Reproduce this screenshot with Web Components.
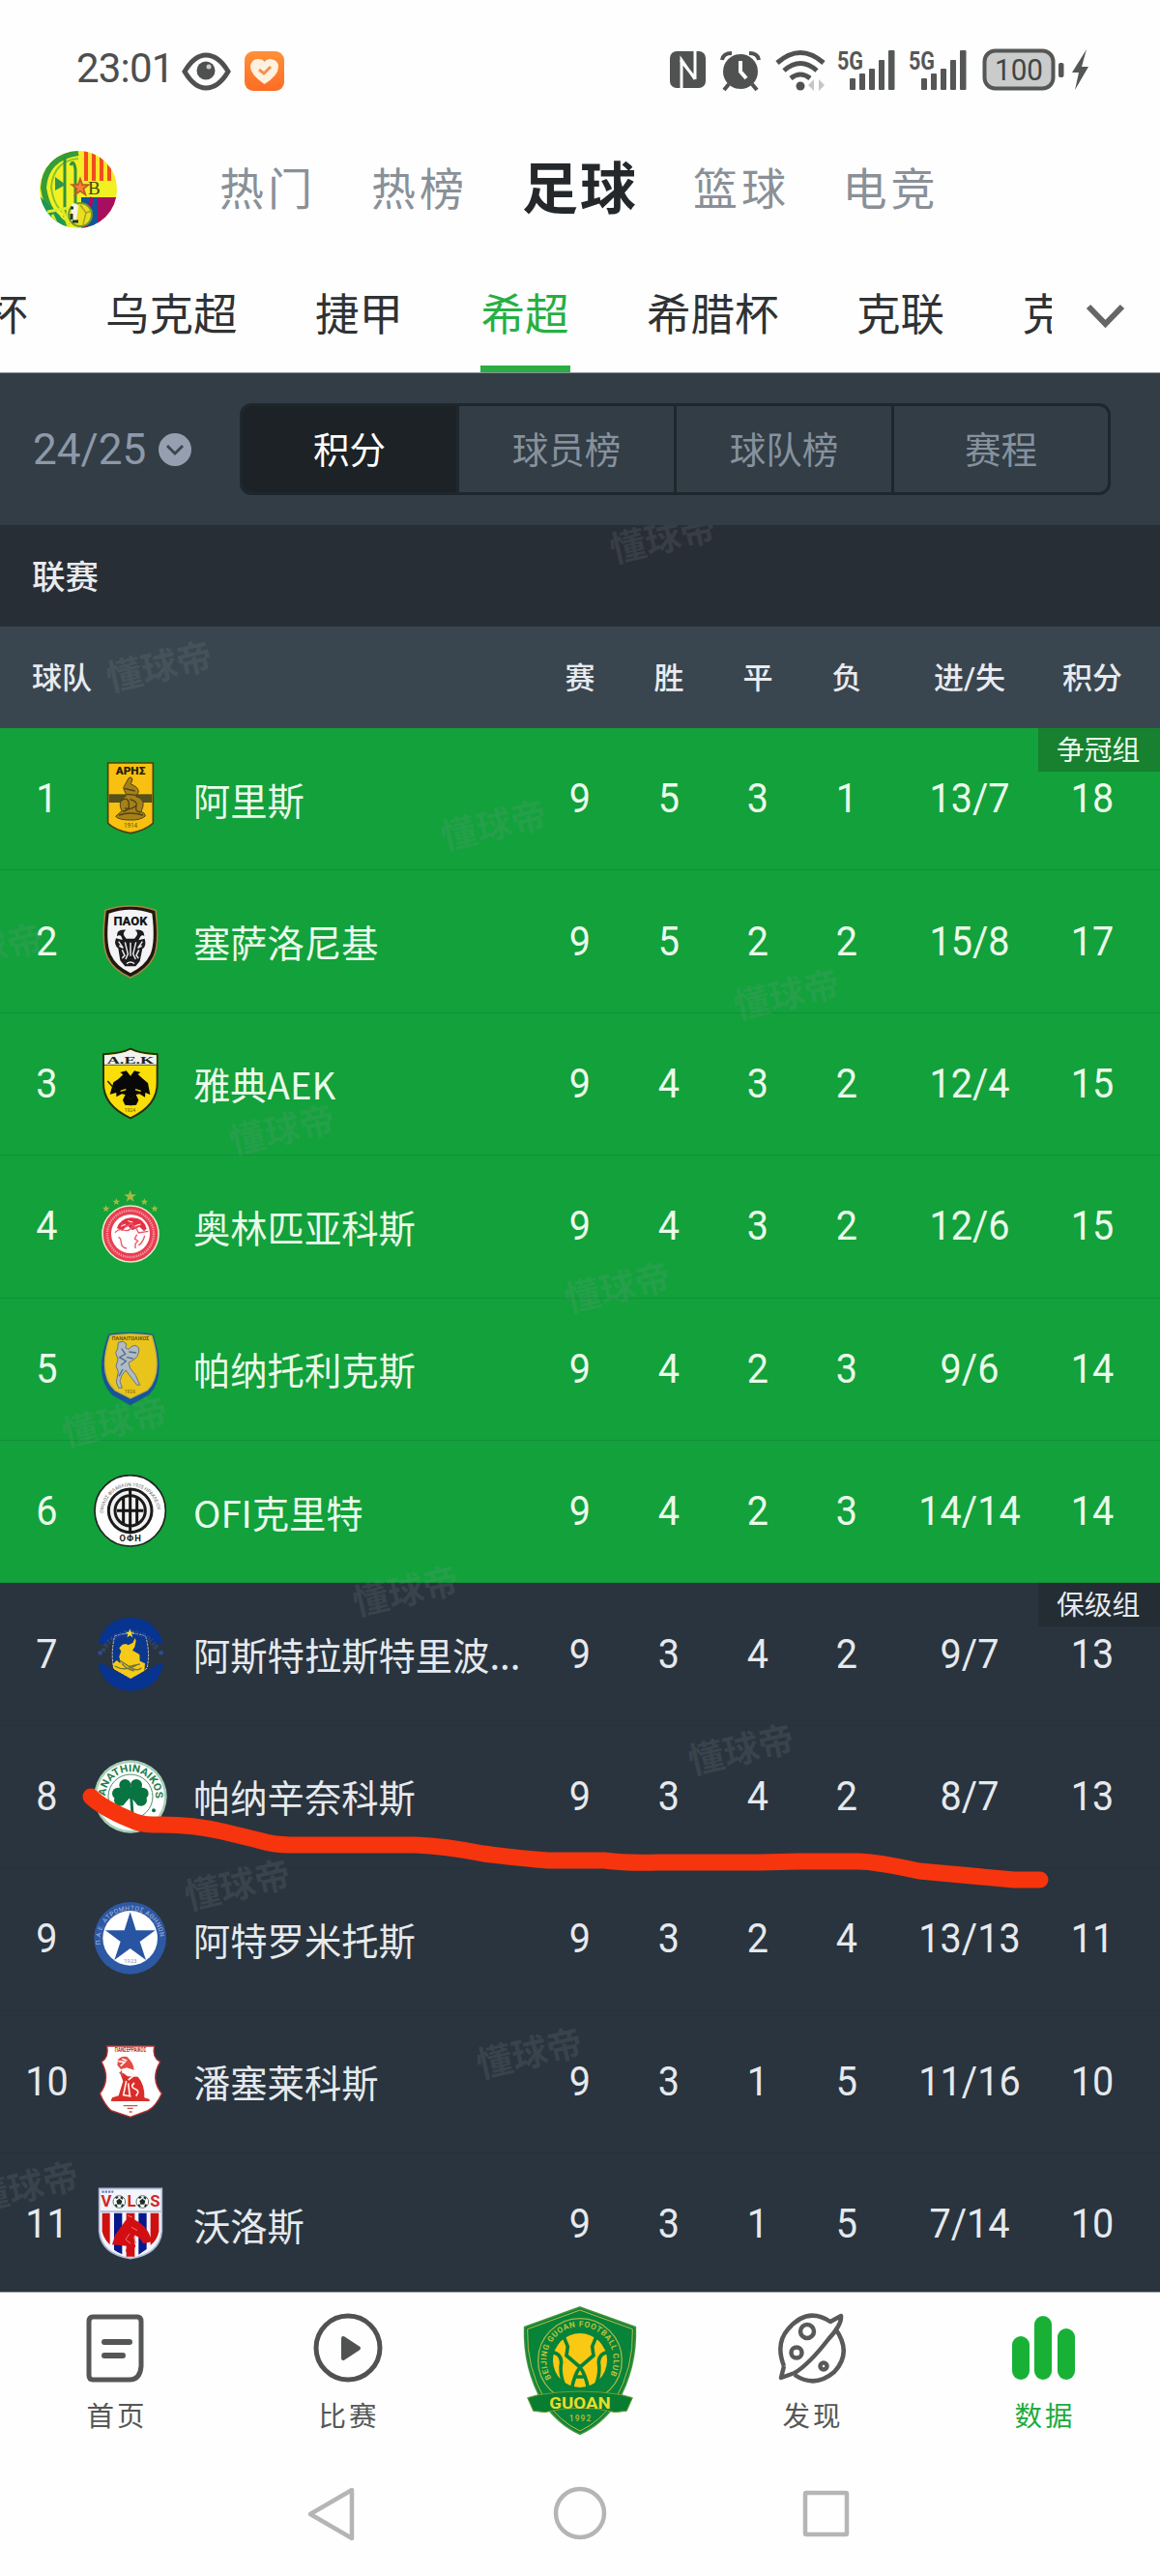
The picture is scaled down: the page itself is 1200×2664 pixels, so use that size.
<!DOCTYPE html>
<html lang="zh-CN">
<head>
<meta charset="UTF-8">
<title>希超 积分</title>
<style>
    body {
        margin: 0;
        width: 1200px;
        height: 2664px;
        overflow: hidden;
        background-color: #fefefe;
        font-family: Roboto, "Noto Sans CJK SC", sans-serif;
    }
</style>
</head>
<body>
<score-app>
    <status-bar></status-bar>
    <sport-tabs>
        <sport-tab>热门</sport-tab>
        <sport-tab>热榜</sport-tab>
        <sport-tab active>足球</sport-tab>
        <sport-tab>篮球</sport-tab>
        <sport-tab>电竞</sport-tab>
    </sport-tabs>
    <league-tabs>
        <league-tab>杯</league-tab>
        <league-tab>乌克超</league-tab>
        <league-tab>捷甲</league-tab>
        <league-tab active>希超</league-tab>
        <league-tab>希腊杯</league-tab>
        <league-tab>克联</league-tab>
        <league-tab>克</league-tab>
    </league-tabs>
    <season-bar season="24/25">
        <season-tab active>积分</season-tab>
        <season-tab>球员榜</season-tab>
        <season-tab>球队榜</season-tab>
        <season-tab>赛程</season-tab>
    </season-bar>
    <standings-table heading="联赛"></standings-table>
    <bottom-nav>
        <nav-item icon="home">首页</nav-item>
        <nav-item icon="play">比赛</nav-item>
        <nav-item icon="guoan"></nav-item>
        <nav-item icon="planet">发现</nav-item>
        <nav-item icon="chart" active>数据</nav-item>
    </bottom-nav>
    <system-nav></system-nav>
</score-app>

<script>
const STAR = "0,-10 2.4,-3.2 9.5,-3.1 3.8,1.2 5.9,8.1 0,4 -5.9,8.1 -3.8,1.2 -9.5,-3.1 -2.4,-3.2";

// every crest is drawn on a 228 x 228 grid
const CRESTS = {
    aris: `
        <path d="M44 3H184V190Q160 212 114 221Q66 212 44 190Z" fill="#f8c010" stroke="#4a4410" stroke-width="5"/>
        <rect x="47" y="100" width="134" height="26" fill="#55501c"/>
        <text x="114" y="40" font-size="32" font-weight="900" text-anchor="middle" textLength="92" lengthAdjust="spacingAndGlyphs" fill="#221e08">ΑΡΗΣ</text>
        <path d="M108 50q9-7 12 4l-5 15q24 8 24 24l-8 14q26 7 22 30l-6 17q14 5 13 14q-18 14-48 12q-34 0-44-11l19-17q-12-24 3-39l12-10q-9-16-10-23z" fill="#a5811a" stroke="#554516" stroke-width="3"/>
        <path d="M84 121q22-16 25 8t-20 24M112 116q26 6 20 22t14 18M78 165q35-12 75 0M94 82l34 8M103 100l32 3M96 143q18 9 35-7" fill="none" stroke="#504214" stroke-width="4"/>
        <text x="114" y="203" font-size="19" text-anchor="middle" fill="#5f4d10">1914</text>`,
    paok: `
        <path d="M36 16Q112-10 192 16Q205 120 186 161Q166 202 114 225Q60 202 42 161Q23 120 36 16Z" fill="#22170f" stroke="#a58642" stroke-width="5"/>
        <path d="M47 26Q112 3 181 26Q192 115 175 154Q158 190 114 211Q69 190 53 154Q36 115 47 26Z" fill="#f4f4f6"/>
        <text x="114" y="62" font-size="36" font-weight="900" text-anchor="middle" textLength="105" lengthAdjust="spacingAndGlyphs" fill="#151515">ΠΑΟΚ</text>
        <path d="M72 97Q70 73 100 77Q85 87 101 104H126Q143 86 128 77Q158 72 157 97Q148 86 139 109L158 104Q165 128 151 135L143 174L130 190H97L82 172L76 134Q61 124 69 103L89 108Q85 87 72 97Z" fill="#1c1c1e"/>
        <path d="M97 115L106 152L99 168M131 115L122 152L130 168M114 116V158M77 113L91 133L79 126M151 113L137 133L149 126M88 139L96 156L88 165M140 139L132 156L139 165M102 182q12-10 24 0" fill="none" stroke="#e8e8e8" stroke-width="4.5"/>`,
    aek: `
        <path d="M30 22Q88 19 114 5Q140 19 197 22V109Q199 181 114 220Q28 181 30 109Z" fill="#fade08" stroke="#26310e" stroke-width="6"/>
        <path d="M33 25Q88 22 114 8Q140 22 194 25V54H33Z" fill="#f3f3f3"/>
        <path d="M33 55H194" stroke="#5c5b1b" stroke-width="3"/>
        <text x="114" y="50" font-size="34" font-family="Liberation Serif" font-weight="bold" text-anchor="middle" textLength="146" lengthAdjust="spacingAndGlyphs" fill="#20251c">A.E.K</text>
        <path d="M114 89L101 73L82 78L91 85L76 99L61 109L50 146L70 141V154L87 145L98 147L90 164L97 179L114 181L132 179L139 164L131 147L142 145L159 155L160 141L175 147L168 111L151 97L137 84L145 78L126 73Z" fill="#080808"/>
        <path d="M43 105L67 132M90 139l11-6M128 133l11 6M104 152l10 8 10-8" stroke="#161605" stroke-width="4"/>
        <path d="M83 136l17-5M129 131l17 5" stroke="#fade08" stroke-width="4"/>
        <text x="112" y="200" font-size="15" text-anchor="middle" fill="#5b5010">1924</text>`,
    olympiacos: `
        <g fill="#a6ba45">
            <polygon points="${STAR}" transform="translate(113 22) scale(2)"/>
            <polygon points="${STAR}" transform="translate(70 39) scale(1.2)"/>
            <polygon points="${STAR}" transform="translate(157 39) scale(1.2)"/>
            <polygon points="${STAR}" transform="translate(38 60) scale(1.2)"/>
            <polygon points="${STAR}" transform="translate(189 60) scale(1.2)"/>
        </g>
        <circle cx="114" cy="138" r="87" fill="#e93e51" stroke="#eee5c8" stroke-width="5"/>
        <circle cx="114" cy="138" r="72" fill="none" stroke="#f59aa3" stroke-width="7" stroke-dasharray="4 3"/>
        <circle cx="114" cy="138" r="60" fill="#fff"/>
        <path d="M72 120Q82 91 114 88Q154 85 164 122L156 130L142 116L120 127L104 112L88 129Z" fill="#e62f43"/>
        <path d="M66 134q12-14 26-8t25-6t22 15l30-5M87 107l13 9 15-10 15 10 18-7M76 149q8 0 9 16t17 18M134 140l-7 13 10 7-8 9v14M158 144q-5 20-19 30" fill="none" stroke="#eb5364" stroke-width="4"/>
        <path d="M84 115l15-7M106 98l15 4M128 113l17-5" stroke="#fff" stroke-width="3"/>`,
    panetolikos: `
        <path d="M46 5Q114-7 184 5Q228 136 172 193L114 226L58 195Q-4 136 46 5Z" fill="#18549b"/>
        <path d="M51 10Q114 0 180 10Q217 130 166 179L114 204L67 180Q11 130 51 10Z" fill="#e9c41b" stroke="#c3b33d" stroke-width="4"/>
        <text x="114" y="23" font-size="16" font-weight="bold" text-anchor="middle" textLength="115" lengthAdjust="spacingAndGlyphs" fill="#6f5414">ΠΑΝΑΙΤΩΛΙΚΟΣ</text>
        <path d="M76 31L91 28L102 36L98 47L108 52Q127 30 140 49Q143 75 118 88L108 94L113 111L130 133L143 163H134L118 142L99 117L87 133L81 151L88 172H77L70 153L76 122L69 104L75 84L68 62L74 51Z" fill="#b2bac2" stroke="#667583" stroke-width="3"/>
        <path d="M86 50l12 17-18 10 20 12-16 13M109 60l23 3M102 77l20 4M90 114l-12 22" fill="none" stroke="#4a6e93" stroke-width="4"/>
        <text x="112" y="190" font-size="15" text-anchor="middle" fill="#766016">1926</text>`,
    ofi: `
        <path id="ring" d="M30 120A84 84 0 0 1 198 120" fill="none"/>
        <circle cx="113" cy="112" r="110" fill="#fff" stroke="#222" stroke-width="5"/>
        <circle cx="113" cy="112" r="67" fill="#f1f1f1" stroke="#1b1b1b" stroke-width="9"/>
        <circle cx="113" cy="112" r="47" fill="none" stroke="#1b1b1b" stroke-width="9"/>
        <path d="M113 44V184M92 73V151M134 73V151M72 112H154" stroke="#151515" stroke-width="9" fill="none"/>
        <text font-size="15" fill="#666"><textPath href="#ring" textLength="254">ΟΜΙΛΟΣ ΦΙΛΑΘΛΩΝ 1925 ΗΡΑΚΛΕΙΟΥ</textPath></text>
        <text x="113" y="206" font-size="28" font-weight="bold" text-anchor="middle" fill="#202020" textLength="67">ΟΦΗ</text>`,
    asteras: `
        <path id="top" d="M35 108A84 84 0 0 1 193 108" fill="none"/>
        <path d="M14 78Q38 0 114 0Q189 0 216 78L198 83L171 66Q114 32 58 66L31 83Z" fill="#073391"/>
        <path d="M14 144Q32 139 58 162Q114 190 170 162Q196 139 216 144Q200 224 114 227Q34 224 14 144Z" fill="#073391"/>
        <path d="M65 57Q114 40 161 57Q176 110 165 157L114 188L62 157Q52 110 65 57Z" fill="#0b378e" stroke="#bac3d0" stroke-width="3" stroke-dasharray="8 3"/>
        <polygon points="${STAR}" transform="translate(112 49) scale(1.5)" fill="#f7dc2c"/>
        <path d="M100 81L107 85L121 78L128 63L131 72L127 91L120 101L142 114L143 134L159 142L157 165L115 188L63 160L59 144L71 132L83 142L79 120L85 104L79 94L89 83Z" fill="#f6cb17"/>
        <path d="M65 150q31 18 68-3M80 132l29 19 34-7M108 151q26 18 40 4M87 142q15 18 38 23" fill="none" stroke="#6d7240" stroke-width="4"/>
        <text font-size="20" fill="#3b579c"><textPath href="#top" textLength="195">ASTERAS TRIPOLIS</textPath></text>
        <g fill="#2d4c94"><circle cx="20" cy="109" r="7"/><circle cx="209" cy="109" r="7"/></g>`,
    panathinaikos: `
        <path id="arc" d="M38 132A78 78 0 1 1 190 132" fill="none"/>
        <circle cx="114" cy="114" r="113" fill="#a7cfb6"/>
        <circle cx="114" cy="114" r="105" fill="#fff"/>
        <circle cx="114" cy="114" r="69" fill="#fff" stroke="#4c9067" stroke-width="3"/>
        <text font-size="32" font-weight="bold" fill="#277e50"><textPath href="#arc" textLength="268" lengthAdjust="spacingAndGlyphs">PANATHINAIKOS</textPath></text>
        <g fill="#087441">
            <circle cx="97" cy="78" r="18"/><circle cx="132" cy="78" r="18"/><path d="M79 84L114 122L150 84Z"/>
            <circle cx="75" cy="104" r="18"/><circle cx="81" cy="125" r="18"/><path d="M76 86L118 110L89 143Z"/>
            <circle cx="152" cy="104" r="18"/><circle cx="147" cy="125" r="18"/><path d="M151 86L110 110L139 143Z"/>
            <path d="M111 105L115 162H124L120 107Z"/><circle cx="186" cy="157" r="6"/>
        </g>`,
    atromitos: `
        <path id="arc" d="M21 132A93 93 0 1 1 205 132" fill="none"/>
        <circle cx="113" cy="112" r="112" fill="#2d58a3"/>
        <circle cx="113" cy="112" r="85" fill="#fff"/>
        <text font-size="20" fill="#a9badc"><textPath href="#arc" textLength="296">Π.Α.Ε. ΑΤΡΟΜΗΤΟΣ ΑΘΗΝΩΝ</textPath></text>
        <polygon points="113,31 131,88 191,88 143,123 162,180 113,144 64,180 83,123 36,88 95,88" fill="#2855a2"/>
        <text x="113" y="190" font-size="18" text-anchor="middle" fill="#8798b9">1923</text>`,
    panserraikos: `
        <path d="M41 3H188Q180 38 206 52Q174 105 211 150Q193 190 168 203L114 223L54 203Q34 186 19 150Q54 105 24 52Q48 38 41 3Z" fill="#fff" stroke="#b72d31" stroke-width="4"/>
        <text x="114" y="22" font-size="19" font-weight="bold" text-anchor="middle" textLength="97" lengthAdjust="spacingAndGlyphs" fill="#b23334">ΠΑΝΣΕΡΡΑΪΚΟΣ</text>
        <path d="M75 46Q83 33 103 36Q124 55 125 77L102 70L84 75L73 62Z" fill="#e34b42"/>
        <path d="M91 86L105 97L137 98Q159 123 157 163L173 168V174H53L57 163L77 157L91 112L83 91Z" fill="#da2d29"/>
        <path d="M98 76l27 18-18 14M101 111l-9 44 24 4M107 118l5 40M126 117q-15 13 2 19t3 22M76 50l20 3-13 12M88 43l15 5" fill="none" stroke="#fff3ef" stroke-width="5"/>
        <path d="M80 84l12 13M87 79q-6 8 5 11M92 188h44M104 196h18M110 207h9" fill="none" stroke="#ca504a" stroke-width="4"/>`,
    volos: `
        <path d="M17 4H211V137Q204 208 114 221Q24 208 17 137Z" fill="#f3f5fa" stroke="#aebada" stroke-width="5"/>
        <path d="M20 75H208" stroke="#a1b3d4" stroke-width="4"/>
        <path d="M26 80H50V178Q32 161 26 137Z M101 80H127V215H101Z M176 80H202V137Q197 163 176 180Z" fill="#ce1110"/>
        <path d="M63 80H88V208Q74 202 63 194Z M139 80H164V192L139 209Z" fill="#07178a"/>
        <path d="M100 101L122 98Q164 116 178 158L180 169L154 175L141 156L125 148L118 160L130 182L112 213L99 198L104 182L57 178L67 147Z" fill="#d30e13"/>
        <path d="M106 88l14 5M117 124l18 10M111 144l-12 18 16 13M124 154l7 20" fill="none" stroke="#ee7670" stroke-width="3"/>
        <g font-size="50" font-weight="bold" fill="#cf2825" text-anchor="middle"><text x="39" y="61">V</text><text x="117" y="61">L</text><text x="190" y="61">S</text></g>
        <g fill="#fff" stroke="#64756e" stroke-width="3"><circle cx="79" cy="45" r="19"/><circle cx="151" cy="45" r="19"/></g>
        <g fill="#1d2f29"><path id="ball" d="M79 35l9 7-3 11H73l-3-11zM66 31l8-3 3 5-8 3zM84 28l8 4-3 6-7-4zM64 54l6-2 4 7-4 3zM94 54l-6-2-4 7 4 3z"/><use href="#ball" x="72"/></g>
        <path d="M25 14h36" stroke="#6c7db7" stroke-width="7" stroke-dasharray="7 3"/>`
};

const NAV_ICONS = {
    home: `<svg width="72" height="76" viewBox="0 0 72 76" fill="none" stroke="#555756" stroke-width="5" stroke-linecap="round" stroke-linejoin="round">
        <path d="M12 5H58Q62 5 62 10V56Q61 70 50 70H12Q8 70 8 65V10Q8 5 12 5Z"/>
        <path d="M24 31H50M24 45H43" stroke-width="6"/></svg>`,
    play: `<svg width="72" height="76" viewBox="0 0 72 76"><circle cx="36" cy="37" r="33" fill="none" stroke="#505251" stroke-width="5"/><path d="M31 27L47 37.500L31 48Z" fill="#505251" stroke="#505251" stroke-width="4" stroke-linejoin="round"/></svg>`,
    planet: `<svg width="72" height="76" viewBox="0 0 72 76" fill="none" stroke="#585a59" stroke-width="4.500" stroke-linejoin="round">
        <path d="M7 56Q-2 33 11 18Q31-6 55 10L66 4Q67 13 53 28Q33 54 18 63L4 68L7 56M60 17Q78 42 59 62Q39 79 18 65"/>
        <circle cx="31" cy="20" r="7"/><circle cx="20" cy="42" r="5.500"/><circle cx="48" cy="56" r="3.500"/></svg>`,
    chart: `<svg width="72" height="76" viewBox="0 0 72 76" fill="#18b136"><rect x="3" y="25" width="18" height="45" rx="9"/><rect x="26" y="4" width="18" height="66" rx="9"/><rect x="50" y="17" width="18" height="53" rx="9"/></svg>`,
    guoan: `<svg width="140" height="150" viewBox="0 0 420 450">
        <path id="club" d="M122 250A104 104 0 1 1 298 250" fill="none"/>
        <path d="M210 30L382 92Q386 220 325 325Q276 395 210 424Q144 395 95 325Q34 220 38 92Z" fill="#07833a" stroke="#3f923d" stroke-width="5"/>
        <path d="M210 39L373 98Q377 218 318 319Q272 386 210 414Q148 386 102 319Q43 218 47 98Z" fill="none" stroke="#bebd3f" stroke-width="3"/>
        <circle cx="210" cy="195" r="130" fill="none" stroke="#a6b842" stroke-width="4"/>
        <text font-size="25" font-weight="bold" fill="#b7c43a"><textPath href="#club" textLength="432">BEIJING GUOAN FOOTBALL CLUB</textPath></text>
        <circle cx="210" cy="195" r="84" fill="#fac913"/>
        <path d="M158 118L172 152L168 180L210 216L252 180L248 152L262 118M122 170Q150 172 152 200Q146 235 160 270M298 170Q270 172 268 200Q274 235 260 270M184 285Q192 240 210 216Q228 240 236 285M190 246H230" fill="none" stroke="#07833a" stroke-width="11"/>
        <path d="M47 311L80 302Q210 280 340 302L373 311L355 352L319 356Q210 329 101 356L65 352Z" fill="#087d32" stroke="#6f9e32" stroke-width="3"/>
        <text x="210" y="345" font-size="47" font-weight="bold" text-anchor="middle" textLength="190" lengthAdjust="spacingAndGlyphs" fill="#eddb29">GUOAN</text>
        <text x="210" y="384" font-size="25" font-weight="bold" text-anchor="middle" textLength="68" fill="#a2b83b">1992</text></svg>`
};

const TEAMS = [
    { rank: 1,  crest: "aris",          name: "阿里斯",            stats: [9, 5, 3, 1, "13/7", 18],  group: "争冠组" },
    { rank: 2,  crest: "paok",          name: "塞萨洛尼基",        stats: [9, 5, 2, 2, "15/8", 17] },
    { rank: 3,  crest: "aek",           name: "雅典AEK",           stats: [9, 4, 3, 2, "12/4", 15] },
    { rank: 4,  crest: "olympiacos",    name: "奥林匹亚科斯",      stats: [9, 4, 3, 2, "12/6", 15] },
    { rank: 5,  crest: "panetolikos",   name: "帕纳托利克斯",      stats: [9, 4, 2, 3, "9/6", 14] },
    { rank: 6,  crest: "ofi",           name: "OFI克里特",         stats: [9, 4, 2, 3, "14/14", 14] },
    { rank: 7,  crest: "asteras",       name: "阿斯特拉斯特里波...", stats: [9, 3, 4, 2, "9/7", 13],   group: "保级组" },
    { rank: 8,  crest: "panathinaikos", name: "帕纳辛奈科斯",      stats: [9, 3, 4, 2, "8/7", 13] },
    { rank: 9,  crest: "atromitos",     name: "阿特罗米托斯",      stats: [9, 3, 2, 4, "13/13", 11] },
    { rank: 10, crest: "panserraikos",  name: "潘塞莱科斯",        stats: [9, 3, 1, 5, "11/16", 10] },
    { rank: 11, crest: "volos",         name: "沃洛斯",            stats: [9, 3, 1, 5, "7/14", 10] }
];

const GRID = "97px 76px 27px 354px 92px 92px 92px 92px 162px 92px";

class ScoreApp extends HTMLElement {
    connectedCallback() {
        this.attachShadow({ mode: "open" });
        this.shadowRoot.innerHTML = `
            <style>
                :host { display: flex; flex-direction: column; width: 1200px; height: 2664px; }
            </style>
            <slot></slot>
        `;
    }
}

class StatusBar extends HTMLElement {
    connectedCallback() {
        const signal = `
            <svg width="62" height="44" viewBox="0 0 62 44" fill="#555756">
                <text x="1" y="21" font-size="25" font-weight="bold" textLength="27" lengthAdjust="spacingAndGlyphs">5G</text>
                <rect x="14" y="30" width="6" height="12" rx="1"/><rect x="24" y="25" width="6" height="17" rx="1"/>
                <rect x="34" y="20" width="6" height="22" rx="1"/><rect x="44" y="11" width="6" height="31" rx="1"/>
                <rect x="54" y="1" width="6.500" height="41" rx="1"/>
            </svg>`;
        this.attachShadow({ mode: "open" });
        this.shadowRoot.innerHTML = `
            <style>
                :host { display: flex; align-items: center; height: 146px; box-sizing: border-box; padding: 0 72px 0 79px; color: #4d4f4e; }
                .time { width: 109px; font-size: 42px; line-height: 50px; letter-spacing: -0.8px; position: relative; top: -2px; }
                .left, .right { display: flex; align-items: center; }
                .right { margin-left: auto; }
                svg { display: block; flex: none; overflow: visible; }
            </style>
            <div class="left">
                <div class="time">23:01</div>
                <svg width="64" height="44" viewBox="0 0 64 44">
                    <path d="M3 23Q13 6 25 6Q38 6 48 23Q38 40 25 40Q13 40 3 23Z" fill="none" stroke="#4f5150" stroke-width="5"/>
                    <circle cx="25" cy="22" r="9.500" fill="#4f5150"/><circle cx="28" cy="18" r="2.500" fill="#ccc"/>
                </svg>
                <svg width="44" height="44" viewBox="0 0 44 44">
                    <defs><linearGradient id="o" x2="0" y2="1"><stop stop-color="#ff9038"/><stop offset="1" stop-color="#fd6c25"/></linearGradient></defs>
                    <rect x="1" y="2" width="41" height="41" rx="9" fill="url(#o)"/>
                    <path d="M21.500 36Q7 26 7 18Q8 10 15 10Q20 10 21.500 13Q24 10 28 10Q36 11 36 18Q36 27 21.500 36Z" fill="#fff1df"/>
                    <path d="M16 21L21 25L28 18" fill="none" stroke="#f2934e" stroke-width="3"/>
                </svg>
            </div>
            <div class="right">
                <svg width="53" height="44" viewBox="0 0 53 44">
                    <rect x="1" y="2" width="37" height="38" rx="7" fill="#505251"/>
                    <path d="M13 41V11L27 31M12 11L27 30M27 31V1" fill="none" stroke="#fefefe" stroke-width="3"/>
                </svg>
                <svg width="57" height="44" viewBox="0 0 57 44">
                    <circle cx="21" cy="23" r="18" fill="#505251"/>
                    <path d="M2 11Q3 4 12 4M30 4Q39 4 40 11M9 36L4 42M33 36L38 42" fill="none" stroke="#505251" stroke-width="4"/>
                    <path d="M21 12V23L27 30" fill="none" stroke="#fefefe" stroke-width="4"/>
                </svg>
                <svg width="63" height="44" viewBox="0 0 63 44" fill="none" stroke="#505251" stroke-width="5">
                    <path d="M2 14Q26-7 50 14M9 22Q26 7 43 22M16 30Q26 22 36 30"/><circle cx="26" cy="38" r="4.500" fill="#505251" stroke="none"/>
                    <path d="M40 31V43L34 37ZM45 31V43L51 37Z" fill="#c5c5c5" stroke="none"/>
                </svg>
                ${signal}<svg width="12" height="44"></svg>${signal}
                <svg width="108" height="44" viewBox="0 0 108 44">
                    <rect x="17.500" y="1.500" width="71" height="39" rx="11" fill="#cacccb" stroke="#555756" stroke-width="4"/>
                    <rect x="94" y="14" width="5.500" height="15" rx="2" fill="#555756"/>
                    <text x="53" y="32" font-size="32" text-anchor="middle" textLength="50" lengthAdjust="spacingAndGlyphs" fill="#424443">100</text>
                </svg>
                <svg width="19" height="44" viewBox="0 0 19 44"><path d="M15 0L0 24H7L3 42L17 18H10L15 0Z" fill="#555756"/></svg>
            </div>
        `;
    }
}

class SportTabs extends HTMLElement {
    connectedCallback() {
        this.attachShadow({ mode: "open" });
        this.shadowRoot.innerHTML = `
            <style>
                :host { display: flex; align-items: center; height: 100px; padding-left: 41px; }
                svg { display: block; margin-right: 70px; }
                .tabs { display: grid; grid-template-columns: 166px 148px 184px 150px 159px; }
            </style>
            <svg width="81" height="82" viewBox="0 0 81 82">
                <clipPath id="c"><circle cx="40" cy="41" r="40"/></clipPath>
                <g clip-path="url(#c)">
                    <rect width="81" height="82" fill="#f1f023"/>
                    <path d="M44 0H81V32H44Z" fill="#ffe625"/><path d="M48 0V32M56 0V32M64 0V32M72 0V32" stroke="#f14c20" stroke-width="4"/>
                    <path d="M43 49H61V82H43Z" fill="#12539b"/><path d="M60 49H81V82H60Z" fill="#a80e60"/><path d="M54 49L47 82" stroke="#a80e60" stroke-width="4"/>
                    <path d="M40 3Q6 8 4 39Q8 68 30 79" fill="none" stroke="#369c36" stroke-width="6"/>
                    <path d="M40 9Q15 11 12 38Q14 58 26 66" fill="none" stroke="#8cc32c" stroke-width="2"/>
                    <path d="M26 7V70M32 16Q35 9 37 20V60" fill="none" stroke="#32923a" stroke-width="3"/>
                    <path d="M16 28L27 36L16 42Z" fill="#31964b"/><path d="M0 48L21 68L28 82H0Z" fill="#1a975b"/><path d="M8 64L30 60M13 67L20 82M24 62L31 82" stroke="#ddeb28" stroke-width="3"/>
                    <circle cx="42" cy="67" r="12" fill="#e9df20" stroke="#70992b" stroke-width="2"/><path d="M42 57l6 8-3 12M48 65l6-2" fill="none" stroke="#a5a51d" stroke-width="1.500"/>
                    <path d="M33 56Q38 54 40 58L38 73H33Z" fill="#f3f3e7"/><path d="M32 60h3M34 74h6M33 66v6" stroke="#22362e" stroke-width="3"/>
                    <polygon points="${STAR}" transform="translate(42 39) scale(.9)" fill="#fb8135" stroke="#bb5d28" stroke-width="2"/>
                    <text x="50" y="46" font-family="Liberation Serif" font-size="19" fill="#424815">B</text>
                </g>
            </svg>
            <div class="tabs"><slot></slot></div>
        `;
    }
}

class SportTab extends HTMLElement {
    connectedCallback() {
        this.attachShadow({ mode: "open" });
        this.shadowRoot.innerHTML = `
            <style>
                :host { display: block; text-align: center; font-size: 46px; line-height: 80px; letter-spacing: 4px; margin-right: -4px; color: #899098; font-weight: 400; }
                :host([active]) { font-size: 58px; letter-spacing: 2px; color: #25282b; font-weight: 700; }
            </style>
            <slot></slot>
        `;
    }
}

class LeagueTabs extends HTMLElement {
    connectedCallback() {
        this.attachShadow({ mode: "open" });
        this.shadowRoot.innerHTML = `
            <style>
                :host { display: flex; height: 140px; border-bottom: 1px solid #8a9195; box-sizing: border-box; }
                .tabs { display: flex; gap: 80.500px; width: 1088px; box-sizing: border-box; overflow: hidden; }
                .tabs::before { content: ""; flex: none; width: 0; margin-left: -97.500px; }
                svg { align-self: flex-end; margin: 0 0 41px 33px; }
            </style>
            <div class="tabs"><slot></slot></div>
            <svg width="46" height="32" viewBox="0 0 46 32"><path d="M5 5L22.500 23L40 5" fill="none" stroke="#656766" stroke-width="6"/></svg>
        `;
    }
}

class LeagueTab extends HTMLElement {
    connectedCallback() {
        this.attachShadow({ mode: "open" });
        this.shadowRoot.innerHTML = `
            <style>
                :host { flex: none; display: flex; flex-direction: column; justify-content: flex-end; font-size: 45.500px; line-height: 60px; color: #303233; white-space: nowrap; }
                div { height: 7px; margin: 21px -1px 0; }
                :host([active]) { color: #27af43; }
                :host([active]) div { background-color: #29ad44; }
            </style>
            <slot></slot>
            <div></div>
        `;
    }
}

class SeasonBar extends HTMLElement {
    connectedCallback() {
        this.attachShadow({ mode: "open" });
        this.shadowRoot.innerHTML = `
            <style>
                :host { display: flex; align-items: center; height: 157px; background-color: #323d46; box-sizing: border-box; padding: 0 51px 0 34px; }
                .season { font-size: 45px; line-height: 50px; color: #8e98a8; width: 130px; }
                .season span { display: inline-block; transform: scaleX(0.98); transform-origin: left; }
                .tabs { display: grid; grid-template-columns: 224px 225px 225px 1fr; width: 901px; height: 95px; margin-left: auto; box-sizing: border-box; border: 3px solid #1d272d; border-radius: 12px; overflow: hidden; }
            </style>
            <div class="season"><span>${this.getAttribute("season")}</span></div>
            <svg width="34" height="34" viewBox="0 0 34 34"><circle cx="17" cy="17" r="17" fill="#959fb0"/><path d="M9 13L17 21L25 13" fill="none" stroke="#3b4651" stroke-width="3"/></svg>
            <div class="tabs"><slot></slot></div>
        `;
    }
}

class SeasonTab extends HTMLElement {
    connectedCallback() {
        this.attachShadow({ mode: "open" });
        this.shadowRoot.innerHTML = `
            <style>
                :host { display: flex; align-items: center; justify-content: center; padding-top: 2px; font-size: 37.500px; line-height: 50px; color: #86919d; border-right: 3px solid #1d272d; }
                :host(:last-of-type) { border-right: 0; }
                :host([active]) { color: #fff; background-color: #1c2225; }
            </style>
            <slot></slot>
        `;
    }
}

class TeamCrest extends HTMLElement {
    connectedCallback() {
        this.attachShadow({ mode: "open" });
        this.shadowRoot.innerHTML = `
            <style>
                :host, svg { display: block; width: 76px; height: 76px; }
            </style>
            <svg viewBox="0 0 228 228">${CRESTS[this.getAttribute("team")]}</svg>
        `;
    }
}

class StandingsRow extends HTMLElement {
    constructor(team) {
        super();
        this.team = team;
        if (team.rank <= 6) this.setAttribute("title-group", "");
    }

    connectedCallback() {
        const { rank, crest, name, stats, group } = this.team;
        this.attachShadow({ mode: "open" });
        this.shadowRoot.innerHTML = `
            <style>
                :host {
                    display: grid;
                    grid-template-columns: ${GRID};
                    align-items: center;
                    position: relative;
                    height: 147.400px;
                    box-sizing: border-box;
                    border-bottom: 1px solid #26313a;
                    background-color: #29343e;
                    color: #e6e9ed;
                    font-size: 43px;
                    line-height: 50px;
                    text-align: center;
                    --badge: #242c34;
                }
                :host([title-group]) { background-color: #12a13b; border-bottom-color: #109138; color: #eafbea; --badge: #178130; }
                .name { grid-column: 4; text-align: left; font-family: "Noto Sans CJK SC", sans-serif; font-size: 38.300px; white-space: nowrap; padding-top: 1px; }
                /* narrow figures */
                .num { transform: scaleX(0.92); margin-top: -2px; }
                /* group label pinned over the row's top right corner */
                .group { position: absolute; top: 0; right: 0; width: 126px; height: 45px; padding-left: 19px; box-sizing: border-box; background-color: var(--badge); font-size: 28.800px; line-height: 46px; text-align: left; }
            </style>
            <div class="num">${rank}</div>
            <team-crest team="${crest}"></team-crest>
            <div class="name">${name}</div>
            ${stats.map((s) => `<div class="num">${s}</div>`).join("")}
            ${group ? `<div class="group">${group}</div>` : ""}
        `;
    }
}

class WatermarkLayer extends HTMLElement {
    connectedCallback() {
        const spots = [[686, 15], [165, 148], [511, 312], [-10, 440], [814, 487], [292, 627], [639, 790], [119, 929], [420, 1104], [767, 1268], [246, 1408], [548, 1582], [27, 1720]];
        this.attachShadow({ mode: "open" });
        this.shadowRoot.innerHTML = `
            <style>
                :host { position: absolute; inset: 0; overflow: hidden; pointer-events: none; }
                span { position: absolute; width: 120px; margin: -25px 0 0 -60px; text-align: center; font-size: 37px; line-height: 50px; font-weight: 700; color: rgba(140, 150, 155, 0.16); transform: rotate(-13deg); }
                svg { position: absolute; left: 0; top: 0; }
            </style>
            ${spots.map(([x, y]) => `<span style="left:${x}px;top:${y}px">懂球帝</span>`).join("")}
            <svg width="1200" height="1827" viewBox="0 543 1200 1827">
                <path d="M94 1858Q105 1869 133 1881Q145 1887 158 1887Q197 1886 230 1894L267 1903Q284 1908 300 1908H430Q460 1909 500 1917Q540 1922 567 1924L625 1924Q650 1927 680 1926H786L826 1925H888Q905 1925 951 1935L1049 1944H1076" fill="none" stroke="#f6340d" stroke-width="17" stroke-linecap="round" stroke-linejoin="round"/>
            </svg>
        `;
    }
}

class StandingsTable extends HTMLElement {
    connectedCallback() {
        const labels = ["赛", "胜", "平", "负", "进/失", "积分"];
        this.attachShadow({ mode: "open" });
        this.shadowRoot.innerHTML = `
            <style>
                :host { display: block; position: relative; height: 1827px; overflow: hidden; color: #e8ebef; background-color: #29343e; }
                .heading { height: 105px; box-sizing: border-box; padding-left: 33px; background-color: #282e36; font-size: 34.500px; line-height: 108px; font-weight: 500; }
                .labels { display: grid; grid-template-columns: ${GRID}; height: 105px; background-color: #3a464f; font-size: 31px; line-height: 107px; font-weight: 500; text-align: center; }
                .labels div:first-child { grid-column: 1 / 5; padding-left: 33px; text-align: left; }
            </style>
            <div class="heading">${this.getAttribute("heading")}</div>
            <div class="labels"><div>球队</div>${labels.map((l) => `<div>${l}</div>`).join("")}</div>
            <div id="rows"></div>
            <watermark-layer></watermark-layer>
        `;
        const rows = this.shadowRoot.querySelector("#rows");
        TEAMS.forEach((team) => rows.appendChild(new StandingsRow(team)));
    }
}

class BottomNav extends HTMLElement {
    connectedCallback() {
        this.attachShadow({ mode: "open" });
        this.shadowRoot.innerHTML = `
            <style>
                :host { display: grid; grid-template-columns: repeat(5, 240px); height: 170px; border-top: 1px solid #a3a9ac; box-sizing: border-box; }
            </style>
            <slot></slot>
        `;
    }
}

class NavItem extends HTMLElement {
    connectedCallback() {
        const icon = this.getAttribute("icon");
        this.attachShadow({ mode: "open" });
        this.shadowRoot.innerHTML = `
            <style>
                :host { display: flex; flex-direction: column; align-items: center; padding-top: 20px; font-size: 28.500px; line-height: 40px; letter-spacing: 3px; color: #555756; font-weight: 400; }
                :host([active]) { color: #20ab3c; }
                :host([icon="guoan"]) { padding-top: 5px; letter-spacing: 0; }
                svg { display: block; margin-bottom: 13px; }
                div { padding-left: 2px; }
            </style>
            ${NAV_ICONS[icon]}
            <div><slot></slot></div>
        `;
    }
}

class SystemNav extends HTMLElement {
    connectedCallback() {
        this.attachShadow({ mode: "open" });
        this.shadowRoot.innerHTML = `
            <style>
                :host { display: flex; justify-content: center; gap: 195px; height: 124px; padding-top: 28px; box-sizing: border-box; }
                svg { fill: none; stroke: #b4b6b5; stroke-width: 4.500; stroke-linejoin: round; }
            </style>
            <svg width="60" height="62" viewBox="0 0 60 62"><path d="M6 32L49 7V57Z"/></svg>
            <svg width="60" height="62" viewBox="0 0 60 62"><circle cx="30" cy="31" r="25"/></svg>
            <svg width="60" height="62" viewBox="0 0 60 62"><rect x="8" y="10" width="43" height="43" rx="1"/></svg>
        `;
    }
}

customElements.define("score-app", ScoreApp);
customElements.define("status-bar", StatusBar);
customElements.define("sport-tabs", SportTabs);
customElements.define("sport-tab", SportTab);
customElements.define("league-tabs", LeagueTabs);
customElements.define("league-tab", LeagueTab);
customElements.define("season-bar", SeasonBar);
customElements.define("season-tab", SeasonTab);
customElements.define("team-crest", TeamCrest);
customElements.define("standings-row", StandingsRow);
customElements.define("watermark-layer", WatermarkLayer);
customElements.define("standings-table", StandingsTable);
customElements.define("bottom-nav", BottomNav);
customElements.define("nav-item", NavItem);
customElements.define("system-nav", SystemNav);
</script>
</body>
</html>
